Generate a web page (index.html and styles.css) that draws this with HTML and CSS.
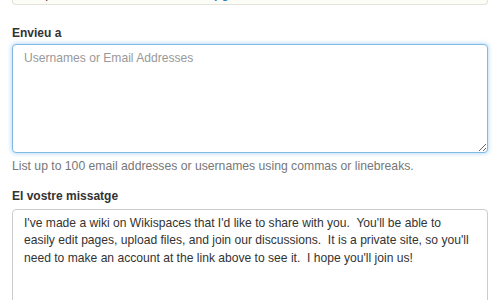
FILE: index.html
```html
<!DOCTYPE html>
<html lang="ca">
<head>
<meta charset="UTF-8">
<title>Convida persones</title>
<link rel="stylesheet" href="styles.css">
</head>
<body>
<div class="invite-form">
    <div class="plan-notice">Your plan is limited to 5 members. <a href="#">Upgrade to unlimited users now!</a></div>

    <div class="field">
        <label class="field-label" for="recipients">Envieu a</label>
        <textarea id="recipients" class="field-input recipients" placeholder="Usernames or Email Addresses"></textarea>
        <div class="field-help">List up to 100 email addresses or usernames using commas or linebreaks.</div>
    </div>

    <div class="field">
        <label class="field-label" for="message">El vostre missatge</label>
        <textarea id="message" class="field-input message">I've made a wiki on Wikispaces that I'd like to share with you.  You'll be able to easily edit pages, upload files, and join our discussions.  It is a private site, so you'll need to make an account at the link above to see it.  I hope you'll join us!</textarea>
    </div>
</div>
</body>
</html>
```

FILE: styles.css
```css
body {
    margin: 0;
    padding: 0;
    background: #fff;
    font-family: "Liberation Sans", Arial, sans-serif;
    color: #333;
    overflow: hidden;
}
.invite-form {
    padding: 0 12px;
}
.plan-notice {
    margin-top: -13px;
    height: 17px;
    padding: 0 4px;
    border: 1px solid #e3e3dc;
    border-top: none;
    border-radius: 0 0 4px 4px;
    background: #fdfdf8;
    font-size: 12.3px;
    line-height: 15px;
    color: #333;
}
.plan-notice a {
    color: #2a84c8;
    font-weight: bold;
    text-decoration: none;
}
.field {
    display: flex;
    flex-direction: column;
}
.field-label {
    margin-top: 21px;
    margin-bottom: 4px;
    font-size: 12px;
    font-weight: bold;
    line-height: 14px;
    color: #333;
}
.field + .field .field-label {
    margin-top: 15px;
    margin-bottom: 6px;
}
.field-input {
    box-sizing: border-box;
    width: 100%;
    margin: 0;
    padding: 5px 15px 5px 11px;
    border: 1px solid #ccc;
    border-radius: 4px;
    font-family: "Liberation Sans", Arial, sans-serif;
    font-size: 12.1px;
    line-height: 17.3px;
    color: #333;
    background: #fff;
    resize: vertical;
    outline: none;
}
.field-input::placeholder {
    color: #999;
}
.recipients {
    height: 109px;
    border-color: #80b9e3;
    box-shadow: 0 0 5px rgba(82, 168, 236, 0.55);
}
.message {
    height: 120px;
}
.field-help {
    margin-top: 5px;
    font-size: 12.2px;
    line-height: 16px;
    color: #777;
}
```
